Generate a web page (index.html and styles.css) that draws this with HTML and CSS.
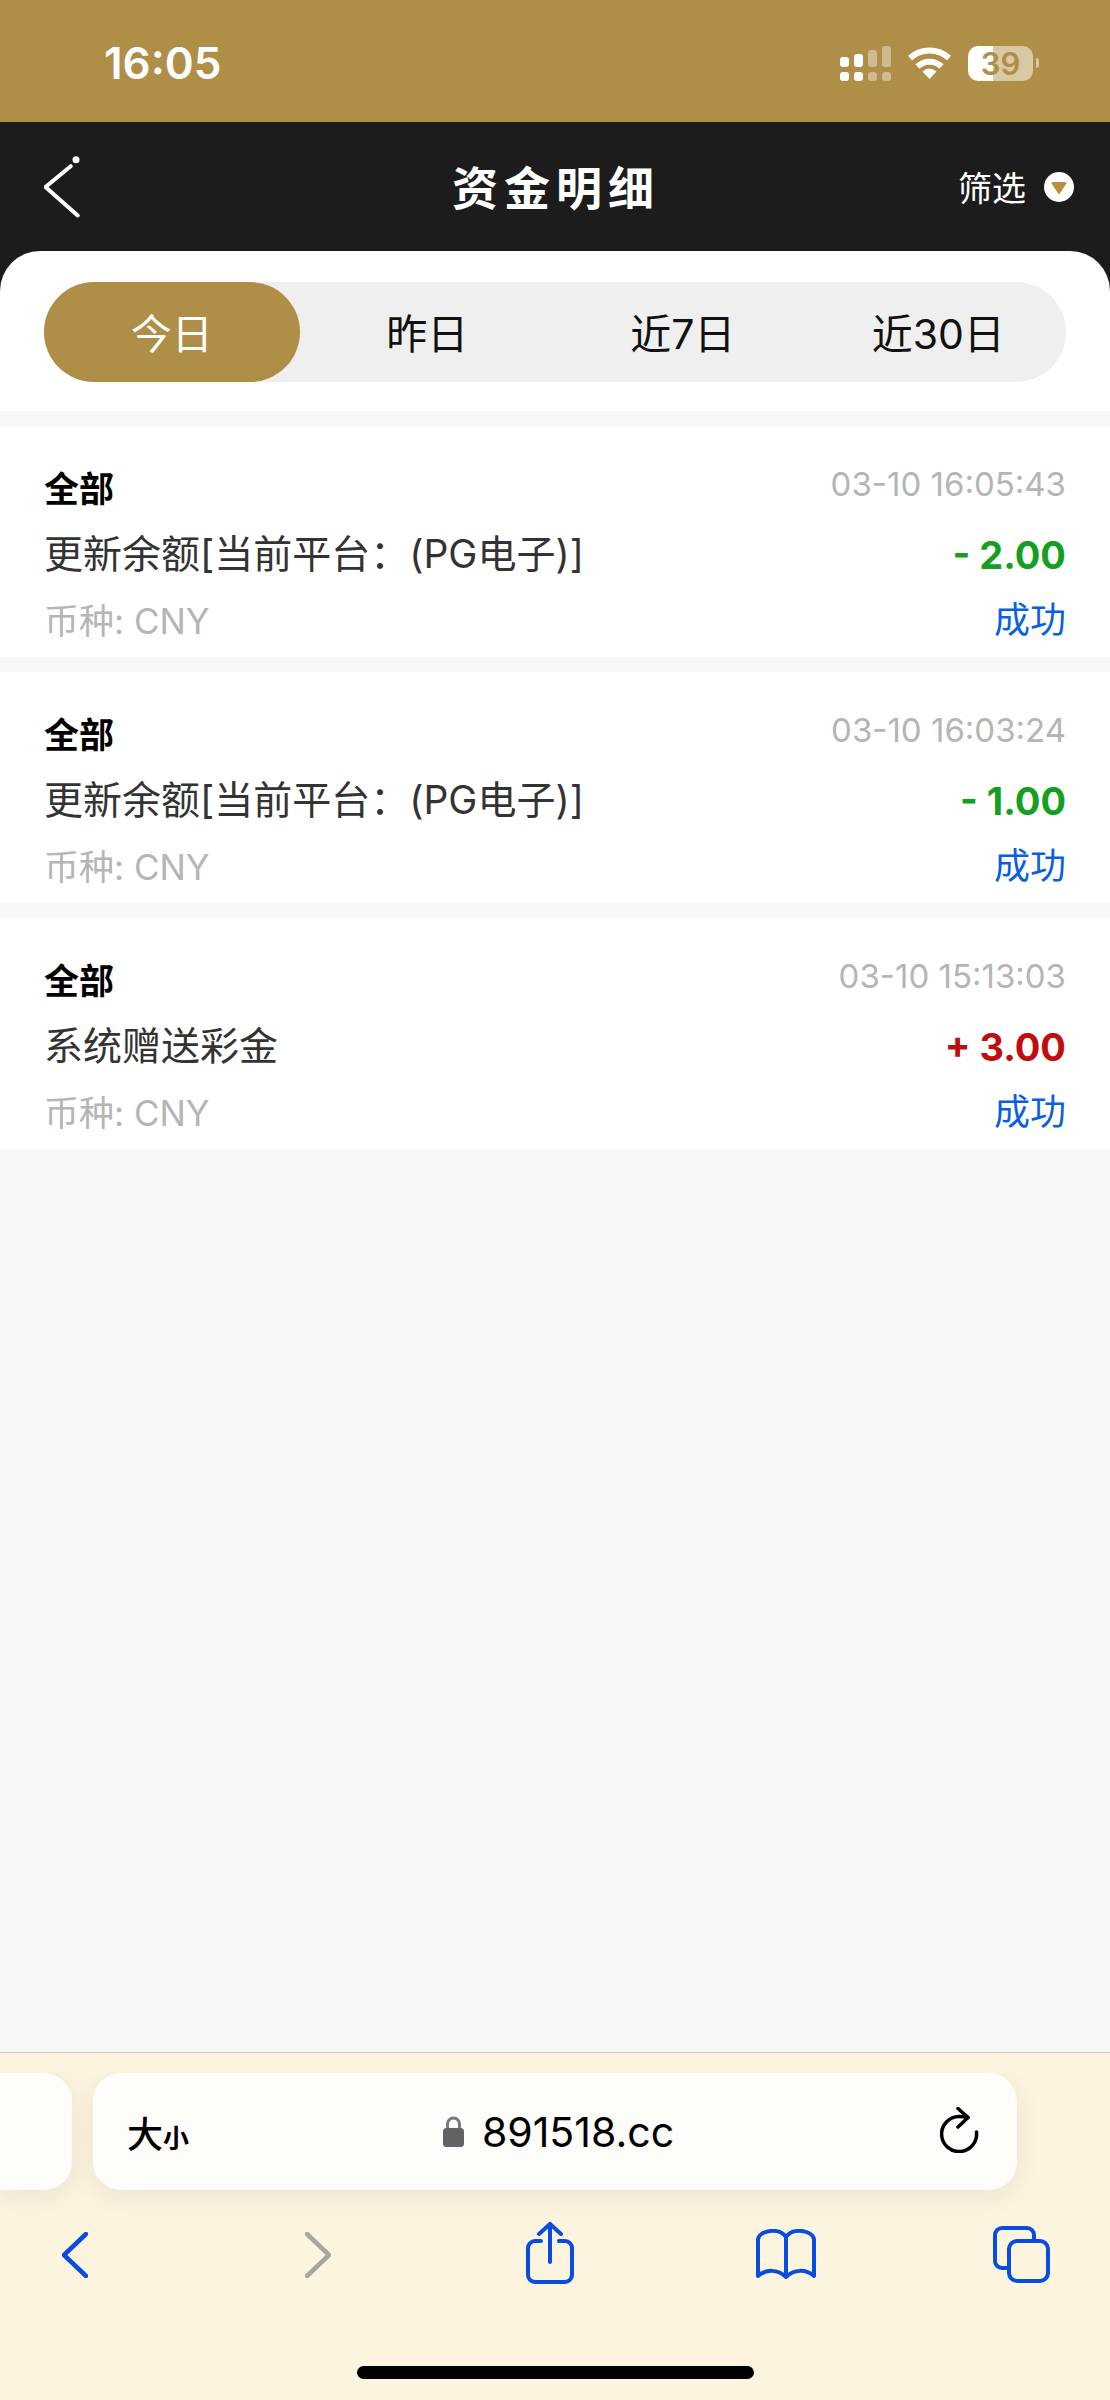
FILE: index.html
```html
<!DOCTYPE html>
<html lang="zh-CN">
<head>
    <meta charset="UTF-8">
    <meta name="viewport" content="width=device-width, initial-scale=1.0">
    <title>资金明细</title>
    <link rel="stylesheet" href="styles.css">
</head>
<body>
<div class="phone">
    <div class="status-bar">
        <span class="time">16:05</span>
        <div class="status-icons">
            <svg class="signal" width="51" height="35" viewBox="0 0 51 35" fill="#fff">
                <rect x="0" y="11" width="9" height="10" rx="3"/>
                <rect x="14" y="8" width="9" height="13" rx="3"/>
                <rect x="28" y="4" width="9" height="17" rx="3" opacity=".4"/>
                <rect x="42" y="0" width="9" height="21" rx="3" opacity=".4"/>
                <rect x="0" y="26" width="9" height="9" rx="3"/>
                <rect x="14" y="26" width="9" height="9" rx="3"/>
                <rect x="28" y="26" width="9" height="9" rx="3" opacity=".4"/>
                <rect x="42" y="26" width="9" height="9" rx="3" opacity=".4"/>
            </svg>
            <svg class="wifi" width="43" height="32" viewBox="0 0 43 32" fill="none" stroke="#fff" stroke-width="6">
                <path d="M2 11A29 29 0 0 1 41 11"/>
                <path d="M9.5 19.5A17.5 17.5 0 0 1 33.5 19.5"/>
                <path d="M21.5 32L14.5 24.5Q21.5 18.5 28.5 24.5Z" fill="#fff" stroke="none"/>
            </svg>
            <div class="battery"><span>39</span></div>
            <div class="battery-tip"></div>
        </div>
    </div>

    <div class="top">
        <div class="nav">
            <svg class="nav-back" width="36" height="62" viewBox="0 0 36 62" fill="none" stroke="#fff" stroke-width="4" stroke-linecap="round" stroke-linejoin="round">
                <path d="M26.7 10.2L1.5 31L33.7 59.5"/>
                <circle cx="32" cy="3.8" r="3.5" fill="#fff" stroke="none"/>
            </svg>
            <h1 class="nav-title">资金明细</h1>
            <div class="filter">
                <span>筛选</span>
                <svg width="30" height="30" viewBox="0 0 30 30">
                    <circle cx="15" cy="15" r="15" fill="#fff"/>
                    <path d="M8.5 11H21.5L15 21Z" fill="#b98f3c" stroke="#b98f3c" stroke-width="2" stroke-linejoin="round"/>
                </svg>
            </div>
        </div>
        <div class="sheet">
            <div class="tabs">
                <div class="tab active">今日</div>
                <div class="tab">昨日</div>
                <div class="tab">近7日</div>
                <div class="tab">近30日</div>
            </div>
        </div>
    </div>

    <div class="list">
        <div class="item">
            <div class="row"><strong class="type">全部</strong><span class="date">03-10 16:05:43</span></div>
            <div class="row"><span class="desc">更新余额[当前平台：(PG电子)]</span><span class="amount minus">- 2.00</span></div>
            <div class="row"><span class="coin">币种: CNY</span><span class="state">成功</span></div>
        </div>
        <div class="item">
            <div class="row"><strong class="type">全部</strong><span class="date">03-10 16:03:24</span></div>
            <div class="row"><span class="desc">更新余额[当前平台：(PG电子)]</span><span class="amount minus">- 1.00</span></div>
            <div class="row"><span class="coin">币种: CNY</span><span class="state">成功</span></div>
        </div>
        <div class="item">
            <div class="row"><strong class="type">全部</strong><span class="date">03-10 15:13:03</span></div>
            <div class="row"><span class="desc">系统赠送彩金</span><span class="amount plus">+ 3.00</span></div>
            <div class="row"><span class="coin">币种: CNY</span><span class="state">成功</span></div>
        </div>
    </div>

    <div class="browser">
        <div class="address-row">
            <div class="prev-tab"></div>
            <div class="address">
                <div class="text-size">大<small>小</small></div>
                <div class="url">
                    <svg width="23" height="31" viewBox="0 0 23 31" fill="none">
                        <path d="M5.5 14V8a6 6 0 0 1 12 0v6" stroke="#77777c" stroke-width="3"/>
                        <rect x="1" y="12" width="21" height="19" rx="3.5" fill="#636366"/>
                    </svg>
                    <span>891518.cc</span>
                </div>
                <svg class="reload" width="39" height="46" viewBox="0 0 39 46" fill="none" stroke="#000" stroke-width="3.5" stroke-linecap="round" stroke-linejoin="round">
                    <path d="M28 10.5C26 10 22 9.5 19 9.5A17.5 17.5 0 1 0 36.5 25"/>
                    <path d="M18 1.5L28 10.5L18 20"/>
                </svg>
            </div>
        </div>
        <div class="toolbar">
            <svg class="tool-back" width="26" height="46" viewBox="0 0 26 46" fill="none" stroke="#0b4ce0" stroke-width="4.5" stroke-linecap="round" stroke-linejoin="round">
                <path d="M24 2L2 23L24 44"/>
            </svg>
            <svg class="tool-forward" width="26" height="46" viewBox="0 0 26 46" fill="none" stroke="#a9a69b" stroke-width="4.5" stroke-linecap="round" stroke-linejoin="round">
                <path d="M2 2L24 23L2 44"/>
            </svg>
            <svg class="tool-share" width="48" height="62" viewBox="0 0 48 62" fill="none" stroke="#0b4ce0" stroke-width="4" stroke-linecap="round" stroke-linejoin="round">
                <path d="M15 19H9a7 7 0 0 0-7 7V53a7 7 0 0 0 7 7H39a7 7 0 0 0 7-7V26a7 7 0 0 0-7-7H33"/>
                <path d="M24 40V2"/>
                <path d="M13 12L24 2L35 12"/>
            </svg>
            <svg class="tool-book" width="60" height="50" viewBox="0 0 60 50" fill="none" stroke="#0b4ce0" stroke-width="4" stroke-linecap="round" stroke-linejoin="round">
                <path d="M30 8V47"/>
                <path d="M2 47C10 40 22 40 30 48C38 40 50 40 58 47V11C58 6 52 3 46 2C41 1.5 34 2 30 8C26 2 19 1.5 14 2C8 3 2 6 2 11Z"/>
            </svg>
            <svg class="tool-tabs" width="57" height="57" viewBox="0 0 57 57" fill="none" stroke="#0b4ce0" stroke-width="4" stroke-linecap="round" stroke-linejoin="round">
                <path d="M14 42H9a7 7 0 0 1-7-7V9a7 7 0 0 1 7-7H34a7 7 0 0 1 7 7V14"/>
                <rect x="16" y="15" width="39" height="40" rx="8"/>
            </svg>
        </div>
        <div class="home-bar"></div>
    </div>
</div>
</body>
</html>
```

FILE: styles.css
```css
body {
    margin: 0;
    padding: 0;
    font-family: Inter, "Noto Sans CJK SC", sans-serif;
    background: #f7f7f7;
}
.phone {
    display: flex;
    flex-direction: column;
    height: 2400px;
}
.status-bar {
    display: flex;
    align-items: center;
    justify-content: space-between;
    height: 118px;
    padding: 4px 71px 0 104px;
    background: #af8e48;
    color: #fff;
}
.time {
    font-size: 44px;
    font-weight: 600;
}
.status-icons {
    display: flex;
    align-items: center;
}
.wifi {
    margin-left: 17px;
}
.battery {
    display: flex;
    align-items: center;
    justify-content: center;
    width: 65px;
    height: 35px;
    margin-left: 17px;
    border-radius: 10px;
    background: linear-gradient(to right, #fff 25px, #d8c8a4 25px);
    color: #af8e48;
    font-size: 31px;
    font-weight: 600;
}
.battery-tip {
    width: 3px;
    height: 10px;
    margin-left: 3px;
    border-radius: 0 3px 3px 0;
    background: #d8c8a4;
}
.top {
    background: #1c1c1c;
}
.nav {
    display: grid;
    grid-template-columns: 1fr auto 1fr;
    align-items: center;
    height: 129px;
    padding: 0 36px 0 44px;
}
.nav-title {
    margin: 0 6px 4px 0;
    color: #fff;
    font-size: 46px;
    font-weight: 700;
    letter-spacing: 6px;
}
.filter {
    display: flex;
    align-items: center;
    justify-content: flex-end;
    gap: 18px;
    color: #fff;
    font-size: 34px;
}
.sheet {
    padding: 31px 44px 29px;
    border-radius: 40px 40px 0 0;
    background: #fff;
}
.tabs {
    display: grid;
    grid-template-columns: repeat(4, 1fr);
    height: 100px;
    border-radius: 50px;
    background: #efefef;
}
.tab {
    display: flex;
    align-items: center;
    justify-content: center;
    padding-bottom: 3px;
    border-radius: 50px;
    color: #111;
    font-size: 41px;
}
.tab.active {
    background: #af8e48;
    color: #fff;
}
.list {
    flex: 1;
    display: flex;
    flex-direction: column;
    gap: 15px;
    padding-top: 15px;
}
.item {
    height: 231px;
    box-sizing: border-box;
    padding: 27px 44px 0;
    background: #fff;
}
.row {
    display: flex;
    align-items: center;
    justify-content: space-between;
    height: 66px;
}
.type {
    color: #000;
    font-size: 35px;
    font-weight: 700;
}
.date {
    margin-bottom: 4px;
    color: #b5b5b5;
    font-size: 33px;
}
.desc {
    margin-bottom: 2px;
    color: #333;
    font-size: 39px;
}
.amount {
    margin-top: 5px;
    font-size: 38px;
    font-weight: 700;
}
.minus {
    color: #14a01e;
}
.plus {
    color: #c00d0d;
}
.coin {
    color: #b5b5b5;
    font-size: 35px;
}
.state {
    margin-bottom: 2px;
    color: #0a5fe0;
    font-size: 36px;
}
.browser {
    height: 347px;
    border-top: 1px solid #c9c8c4;
    background: #fdf4e0;
}
.address-row {
    display: flex;
    gap: 21px;
    margin-top: 20px;
    overflow: hidden;
    padding-bottom: 30px;
    margin-bottom: -30px;
}
.prev-tab {
    width: 72px;
    height: 117px;
    border-radius: 0 28px 28px 0;
    background: #fffdf9;
    box-shadow: 0 6px 28px rgba(0, 0, 0, 0.08);
}
.address {
    display: grid;
    grid-template-columns: 1fr auto 1fr;
    align-items: center;
    width: 924px;
    height: 117px;
    box-sizing: border-box;
    padding: 0 38px 0 34px;
    border-radius: 28px;
    background: #fffdf9;
    box-shadow: 0 6px 28px rgba(0, 0, 0, 0.08);
}
.text-size {
    color: #000;
    font-size: 36px;
    font-weight: 500;
}
.text-size small {
    font-size: 26px;
    font-weight: 700;
}
.url {
    display: flex;
    align-items: center;
    gap: 17px;
    margin-left: 10px;
    color: #000;
    font-size: 41px;
}
.reload {
    justify-self: end;
    margin-top: -3px;
}
.toolbar {
    display: flex;
    align-items: flex-start;
    height: 66px;
    padding-top: 32px;
}
.tool-back {
    margin: 10px 0 0 62px;
}
.tool-forward {
    margin: 10px 0 0 217px;
}
.tool-share {
    margin-left: 195px;
}
.tool-book {
    margin: 7px 0 0 182px;
}
.tool-tabs {
    margin: 4px 0 0 177px;
}
.home-bar {
    width: 397px;
    height: 13px;
    margin: 78px auto 0;
    border-radius: 7px;
    background: #000;
}
```
